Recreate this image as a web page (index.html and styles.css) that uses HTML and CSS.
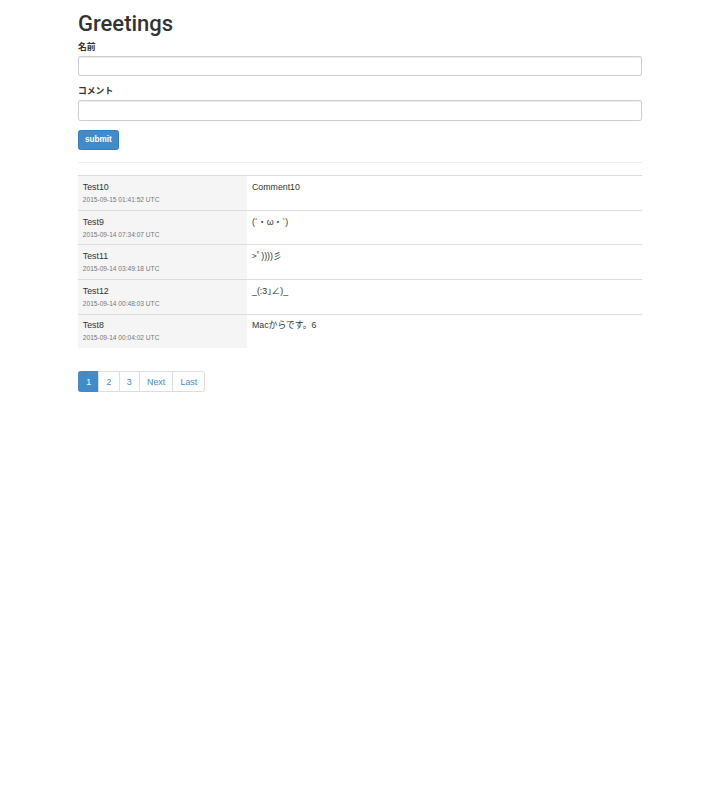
FILE: index.html
```html
<!DOCTYPE html>
<html>
<head>
    <meta charset="utf-8">
    <title>Greetings</title>
    <link rel="stylesheet" href="styles.css">
</head>
<body>
    <div class="container">
        <h1>Greetings</h1>
        <!-- Post form -->
        <form>
            <div class="form-group">
                <label>名前</label>
                <input type="text" name="name" class="form-control">
            </div>
            <div class="form-group">
                <label>コメント</label>
                <input type="text" name="comment" class="form-control">
            </div>
            <button type="submit" class="btn">submit</button>
        </form>

        <hr>

        <!-- Greetings list -->
        <table class="table">
            <tr>
                <td class="author">Test10<span class="date">2015-09-15 01:41:52 UTC</span></td>
                <td>Comment10</td>
            </tr>
            <tr>
                <td class="author">Test9<span class="date">2015-09-14 07:34:07 UTC</span></td>
                <td>(´・ω・`)</td>
            </tr>
            <tr>
                <td class="author">Test11<span class="date">2015-09-14 03:49:18 UTC</span></td>
                <td>&gt;ﾟ))))彡</td>
            </tr>
            <tr>
                <td class="author">Test12<span class="date">2015-09-14 00:48:03 UTC</span></td>
                <td>_(:3｣∠)_</td>
            </tr>
            <tr>
                <td class="author">Test8<span class="date">2015-09-14 00:04:02 UTC</span></td>
                <td>Macからです。6</td>
            </tr>
        </table>

        <!-- Paging -->
        <ul class="pagination">
            <li class="active"><a href="#">1</a></li>
            <li><a href="#">2</a></li>
            <li><a href="#">3</a></li>
            <li><a href="#">Next</a></li>
            <li><a href="#">Last</a></li>
        </ul>
    </div>
</body>
</html>
```

FILE: styles.css
```css
/* Base */
body {
    margin: 0;
    font-family: "Liberation Sans", "Noto Sans CJK JP", sans-serif;
    font-size: 8.8px;
    line-height: 12px;
    color: #333;
}

.container {
    width: 564px;
    margin: 0 auto;
    padding: 0 9px;
}

h1 {
    font-family: Roboto, "Liberation Sans", sans-serif;
    font-size: 22px;
    font-weight: 500;
    line-height: 23px;
    margin: 12px 0 6px;
}

/* Form */
.form-group {
    margin-bottom: 9px;
}
label {
    display: inline-block;
    margin-bottom: 3px;
    font-weight: bold;
}
.form-control {
    display: block;
    width: 100%;
    height: 20.4px;
    box-sizing: border-box;
    padding: 3.6px 7.2px;
    font: inherit;
    border: 1px solid #ccc;
    border-radius: 2.4px;
    box-shadow: inset 0 1px 1px rgba(0, 0, 0, .075);
}
.btn {
    display: inline-block;
    padding: 3.5px 6px;
    font-family: inherit;
    font-size: 8.2px;
    font-weight: bold;
    line-height: 11.4px;
    color: #fff;
    background-color: #428bca;
    border: 1px solid #357ebd;
    border-radius: 2.4px;
}

hr {
    margin: 12px 0;
    border: 0;
    border-top: 1px solid #eee;
}

/* Table */
.table {
    width: 100%;
    border-collapse: collapse;
    margin-bottom: 12px;
}
.table td {
    padding: 4.8px;
    vertical-align: top;
    border-top: 1px solid #ddd;
    line-height: 12px;
}
.table td.author {
    width: 30%;
    background-color: #f5f5f5;
}
.date {
    display: block;
    font-size: 6.6px;
    line-height: 13px;
    margin-bottom: -1px;
    color: #777;
}

/* Pagination */
.pagination {
    display: inline-flex;
    margin: 11px 0;
    padding: 0;
    list-style: none;
}
.pagination a {
    display: block;
    padding: 3.6px 7.2px;
    margin-left: -1px;
    line-height: 12px;
    color: #428bca;
    text-decoration: none;
    background-color: #fff;
    border: 1px solid #ddd;
}
.pagination li:first-child a {
    margin-left: 0;
    border-radius: 2.4px 0 0 2.4px;
}
.pagination li:last-child a {
    border-radius: 0 2.4px 2.4px 0;
}
.pagination .active a {
    color: #fff;
    background-color: #428bca;
    border-color: #428bca;
}
```
